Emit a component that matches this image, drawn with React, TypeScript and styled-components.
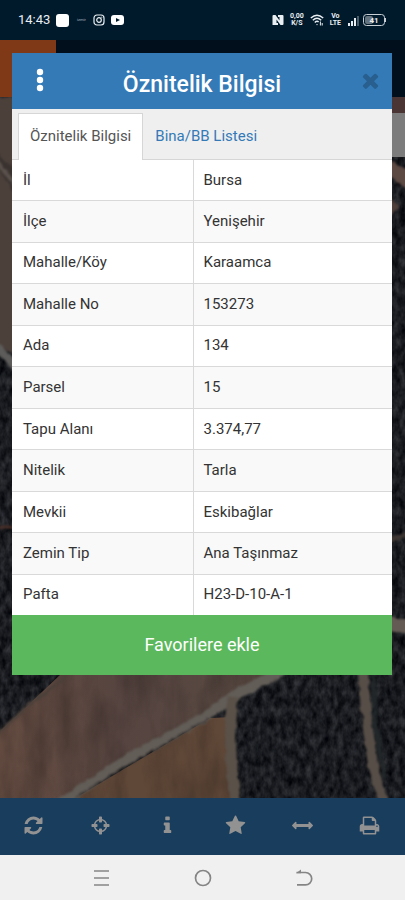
import React from "react";
import styled, { createGlobalStyle } from "styled-components";

const GlobalStyle = createGlobalStyle`
  *, *::before, *::after { box-sizing: border-box; }
  body { margin: 0; background: #001a2c; font-family: Roboto, "Noto Sans", sans-serif; }
  button { font-family: inherit; border: 0; padding: 0; background: none; cursor: pointer; }
`;

const Page = styled.div`
  display: flex;
  flex-direction: column;
  min-height: 100vh;
`;

const StatusBar = styled.div`
  display: flex;
  align-items: center;
  justify-content: space-between;
  height: 40px;
  padding: 0 18px;
  background: #001a2c;
  color: #e9eef2;
`;

const StatusGroup = styled.div`
  display: flex;
  align-items: center;
  gap: 6px;
`;

const Clock = styled.span`
  font-size: 13px;
  line-height: 16px;
`;

const AppBadge = styled.span`
  width: 13px;
  height: 13px;
  border-radius: 3px;
  background: #fff;
`;

const TinyLabel = styled.span`
  width: 12px;
  font-size: 4px;
  line-height: 8px;
  text-align: center;
  color: #aab4bc;
`;

const StackedLabel = styled.span`
  display: flex;
  flex-direction: column;
  align-items: center;
  font-size: 7px;
  line-height: 7px;
  font-weight: 700;
`;

const AppArea = styled.div`
  position: relative;
  flex: 1;
  display: flex;
  flex-direction: column;
`;

const AppHeader = styled.header`
  height: 57px;
  background: #000f1b;
`;

const MenuTile = styled.div`
  width: 56px;
  height: 100%;
  background: #803916;
`;

const MapArea = styled.main`
  position: relative;
  flex: 1;
  min-height: 600px;
  overflow: hidden;
  background: #1b1d21;
`;

const MapDrawing = styled.svg`
  position: absolute;
  inset: 0;
  width: 100%;
  height: 100%;
`;

const SearchPanel = styled.div`
  position: absolute;
  top: 16px;
  right: 0;
  width: 40px;
  height: 44px;
  background: #7c7c7c;
`;

const Toolbar = styled.nav`
  display: grid;
  grid-template-columns: repeat(6, 1fr);
  height: 57px;
  padding: 0 2px 2px 0;
  background: #193d5c;
`;

const ToolButton = styled.button`
  display: flex;
  align-items: center;
  justify-content: center;
  color: #929292;
`;

const NavBar = styled.nav`
  display: flex;
  align-items: center;
  justify-content: center;
  gap: 79px;
  height: 45px;
  background: #f0f0f0;
`;

const NavButton = styled.button`
  display: flex;
  width: 22px;
  height: 22px;
  color: #858585;
`;

const Overlay = styled.div`
  position: absolute;
  top: 0;
  left: 0;
  right: 0;
  padding: 13px 13px 0 12px;
`;

const Dialog = styled.section`
  display: flex;
  flex-direction: column;
  background: #fff;
`;

const DialogHeader = styled.header`
  display: grid;
  grid-template-columns: 30px 1fr 30px;
  align-items: center;
  height: 56px;
  padding: 0 7px 2px 13px;
  background: #337ab7;
`;

const Title = styled.h1`
  margin: 0;
  padding: 10px 6px 0 0;
  font-size: 23px;
  line-height: 28px;
  font-weight: 500;
  text-align: center;
  color: #fff;
`;

const HeaderButton = styled.button<{ $color: string }>`
  display: flex;
  align-items: center;
  justify-content: center;
  height: 30px;
  color: ${(p) => p.$color};
`;

const Tabs = styled.div`
  display: flex;
  align-items: flex-end;
  height: 51px;
  padding-left: 6px;
  background: #efefef;
  border-bottom: 1px solid #d6d6d6;
`;

const Tab = styled.button<{ $active?: boolean }>`
  height: 47px;
  padding: 0 11px 2px;
  margin-bottom: -1px;
  font-size: 15px;
  line-height: 20px;
  color: ${(p) => (p.$active ? "#555" : "#337ab7")};
  background: ${(p) => (p.$active ? "#fff" : "transparent")};
  border: 1px solid ${(p) => (p.$active ? "#d6d6d6" : "transparent")};
  border-bottom: 0;
`;

const Table = styled.table`
  width: 100%;
  height: 455px;
  table-layout: fixed;
  border-collapse: collapse;
  font-size: 15px;
  line-height: 20px;
  color: #333;
`;

const Row = styled.tr`
  &:nth-child(even) { background: #f9f9f9; }
  & + & { border-top: 1px solid #d9d9d9; }
`;

const Label = styled.th`
  width: 181px;
  padding: 0 11px 1px;
  font-weight: 400;
  text-align: left;
`;

const Value = styled.td`
  padding: 0 10px 1px;
  border-left: 1px solid #d9d9d9;
`;

const FavoriteButton = styled.button`
  height: 60px;
  font-size: 18px;
  line-height: 24px;
  color: #fff;
  background: #5cb85c;
`;

const rows: [string, string][] = [
  ["İl", "Bursa"],
  ["İlçe", "Yenişehir"],
  ["Mahalle/Köy", "Karaamca"],
  ["Mahalle No", "153273"],
  ["Ada", "134"],
  ["Parsel", "15"],
  ["Tapu Alanı", "3.374,77"],
  ["Nitelik", "Tarla"],
  ["Mevkii", "Eskibağlar"],
  ["Zemin Tip", "Ana Taşınmaz"],
  ["Pafta", "H23-D-10-A-1"],
];

const icons = {
  refresh:
    "M1639 1056q0 5-1 7-64 268-268 434.5t-478 166.5q-146 0-282.5-55t-243.5-157l-129 129q-19 19-45 19t-45-19-19-45v-448q0-26 19-45t45-19h448q26 0 45 19t19 45-19 45l-137 137q71 66 161 102t187 36q134 0 250-65t186-179q11-17 53-117 8-23 30-23h192q13 0 22.5 9.5t9.5 22.5zm25-800v448q0 26-19 45t-45 19h-448q-26 0-45-19t-19-45 19-45l138-138q-148-137-349-137-134 0-250 65t-186 179q-11 17-53 117-8 23-30 23h-199q-13 0-22.5-9.5t-9.5-22.5v-7q65-268 270-434.5t480-166.5q146 0 284 55.5t245 156.5l130-129q19-19 45-19t45 19 19 45z",
  crosshairs:
    "M1325 1024h-109q-26 0-45-19t-19-45v-128q0-26 19-45t45-19h109q-32-108-112.5-188.5t-188.5-112.5v109q0 26-19 45t-45 19h-128q-26 0-45-19t-19-45v-109q-108 32-188.5 112.5t-112.5 188.5h109q26 0 45 19t19 45v128q0 26-19 45t-45 19h-109q32 108 112.5 188.5t188.5 112.5v-109q0-26 19-45t45-19h128q26 0 45 19t19 45v109q108-32 188.5-112.5t112.5-188.5zm339-192v128q0 26-19 45t-45 19h-143q-37 161-154.5 278.5t-278.5 154.5v143q0 26-19 45t-45 19h-128q-26 0-45-19t-19-45v-143q-161-37-278.5-154.5t-154.5-278.5h-143q-26 0-45-19t-19-45v-128q0-26 19-45t45-19h143q37-161 154.5-278.5t278.5-154.5v-143q0-26 19-45t45-19h128q26 0 45 19t19 45v143q161 37 278.5 154.5t154.5 278.5h143q26 0 45 19t19 45z",
  info: "M1216 1344v128q0 26-19 45t-45 19h-512q-26 0-45-19t-19-45v-128q0-26 19-45t45-19h64v-384h-64q-26 0-45-19t-19-45v-128q0-26 19-45t45-19h384q26 0 45 19t19 45v576h64q26 0 45 19t19 45zm-128-1152v192q0 26-19 45t-45 19h-256q-26 0-45-19t-19-45v-192q0-26 19-45t45-19h256q26 0 45 19t19 45z",
  star: "M1728 647q0 22-26 48l-363 354 86 500q1 7 1 20 0 21-10.5 35.5t-30.5 14.5q-19 0-40-12l-449-236-449 236q-22 12-40 12-21 0-31.5-14.5t-10.5-35.5q0-6 2-20l86-500-364-354q-25-27-25-48 0-37 56-46l502-73 225-455q19-41 49-41t49 41l225 455 502 73q56 9 56 46z",
  arrows:
    "M1792 896q0 26-19 45l-256 256q-19 19-45 19t-45-19-19-45v-128h-1024v128q0 26-19 45t-45 19-45-19l-256-256q-19-19-19-45t19-45l256-256q19-19 45-19t45 19 19 45v128h1024v-128q0-26 19-45t45-19 45 19l256 256q19 19 19 45z",
  print:
    "M448 1536h896v-256h-896v256zm0-640h896v-384h-160q-40 0-68-28t-28-68v-160h-640v640zm1152 64q0-26-19-45t-45-19-45 19-19 45 19 45 45 19 45-19 19-45zm128 0v416q0 13-9.5 22.5t-22.5 9.5h-224v160q0 40-28 68t-68 28h-960q-40 0-68-28t-28-68v-160h-224q-13 0-22.5-9.5t-9.5-22.5v-416q0-79 56.5-135.5t135.5-56.5h64v-544q0-40 28-68t68-28h672q40 0 88 20t76 48l152 152q28 28 48 76t20 88v256h64q79 0 135.5 56.5t56.5 135.5z",
  times:
    "M1490 1322q0 40-28 68l-136 136q-28 28-68 28t-68-28l-294-294-294 294q-28 28-68 28t-68-28l-136-136q-28-28-28-68t28-68l294-294-294-294q-28-28-28-68t28-68l136-136q28-28 68-28t68 28l294 294 294-294q28-28 68-28t68 28l136 136q28 28 28 68t-28 68l-294 294 294 294q28 28 28 68z",
};

const Icon = ({ name, size = 21 }: { name: keyof typeof icons; size?: number }) => (
  <svg width={size} height={size} viewBox="0 0 1792 1792" fill="currentColor" aria-hidden="true">
    <path d={icons[name]} />
  </svg>
);

const tools: { name: keyof typeof icons; label: string }[] = [
  { name: "refresh", label: "Yenile" },
  { name: "crosshairs", label: "Konum" },
  { name: "info", label: "Bilgi" },
  { name: "star", label: "Favoriler" },
  { name: "arrows", label: "Ölçüm" },
  { name: "print", label: "Yazdır" },
];

const Satellite = () => (
  <MapDrawing viewBox="0 0 405 701" preserveAspectRatio="xMidYMax slice" aria-hidden="true">
    <defs>
      <filter id="trees" x="0" y="0" width="100%" height="100%" colorInterpolationFilters="sRGB">
        <feTurbulence type="fractalNoise" baseFrequency="0.16 0.1" numOctaves="3" seed="8" />
        <feColorMatrix values="0.26 0 0 0 -0.03  0.26 0 0 0 -0.022  0.26 0 0 0 -0.004  0 0 0 0 1" />
        <feComposite in2="SourceGraphic" operator="in" />
      </filter>
      <filter id="soil" x="0" y="0" width="100%" height="100%" colorInterpolationFilters="sRGB">
        <feTurbulence type="fractalNoise" baseFrequency="0.04 0.015" numOctaves="4" seed="4" result="n" />
        <feColorMatrix in="n" values="0 0 0 0 0.14  0 0 0 0 0.11  0 0 0 0 0.1  0.7 0 0 0 -0.25" />
        <feComposite in2="SourceGraphic" operator="in" result="shade" />
        <feMerge>
          <feMergeNode in="SourceGraphic" />
          <feMergeNode in="shade" />
        </feMerge>
      </filter>
      <filter
        id="rough"
        filterUnits="userSpaceOnUse"
        x="-10"
        y="-10"
        width="425"
        height="721"
        colorInterpolationFilters="sRGB"
      >
        <feTurbulence type="fractalNoise" baseFrequency="0.12" numOctaves="2" seed="2" />
        <feDisplacementMap in="SourceGraphic" scale="5" xChannelSelector="R" yChannelSelector="G" />
        <feGaussianBlur stdDeviation="0.8" />
      </filter>
      <linearGradient id="field" x1="0" y1="0" x2="1" y2="0">
        <stop offset="0" stopColor="#664d42" />
        <stop offset="0.45" stopColor="#564440" />
        <stop offset="1" stopColor="#594a42" />
      </linearGradient>
    </defs>
    <rect width="405" height="701" filter="url(#trees)" />
    <g filter="url(#rough)">
      <path d="M-8 0H22V262L-8 245Z" fill="#4c403b" />
      <path d="M-8 50L22 80V108L-8 62Z" fill="#39322f" />
      <path d="M-8 58L20 94" stroke="#5b524d" strokeWidth="4" />
      <path d="M-8 246L22 275" stroke="#5d5c5a" strokeWidth="8" />
      <path d="M-8 430H20" stroke="#4a302a" strokeWidth="3" />
      <path d="M390 -3H412V18H390Z" fill="#4a3534" />
      <path d="M386 62L412 75V96L386 78Z" fill="#5c4943" />
      <path d="M386 92L399 110L386 125Z" fill="#4f3f3a" />
      <path d="M386 444L412 436" stroke="#3c3532" strokeWidth="6" />
      <path d="M386 526L412 531" stroke="#655b55" strokeWidth="15" />
    </g>
    <g filter="url(#soil)">
      <path d="M60 578L24 612L0 634V701H65L270 578Z" fill="url(#field)" />
      <path d="M75 701L210 621L232 620L236 701Z" fill="#604838" />
    </g>
    <path d="M68 578L42 598L20 616L-4 638" fill="none" stroke="#4b403a" strokeWidth="3" filter="url(#rough)" />
    <g fill="none" filter="url(#rough)">
      <path d="M58 708L120 667L203 621L235 598L282 574" stroke="#625d57" strokeWidth="10" />
      <path d="M75 700L135 664L208 622" stroke="#302a28" strokeWidth="1" />
      <path d="M233 600Q227 645 236 710" stroke="#5a5149" strokeWidth="11" />
      <path d="M363 574L367 625L374 675L385 708" stroke="#574e48" strokeWidth="10" />
      <path d="M373 576L375 625L384 680" stroke="#22282a" strokeWidth="4" />
    </g>
  </MapDrawing>
);

export default function App() {
  return (
    <Page>
      <GlobalStyle />
      <StatusBar>
        <StatusGroup>
          <Clock>14:43</Clock>
          <AppBadge />
          <TinyLabel>izmir</TinyLabel>
          <svg width="12" height="12" viewBox="0 0 12 12" fill="none" stroke="currentColor">
            <rect x="1" y="1" width="10" height="10" rx="3" strokeWidth="1.2" />
            <circle cx="6" cy="6" r="2.3" strokeWidth="1.2" />
            <circle cx="8.8" cy="3.2" r="0.4" strokeWidth="0.5" />
          </svg>
          <svg width="13" height="10" viewBox="0 0 13 10">
            <rect width="13" height="10" rx="3" fill="#fff" />
            <path d="M5 3L9 5L5 7Z" fill="#001a2c" />
          </svg>
        </StatusGroup>
        <StatusGroup>
          <svg width="12" height="12" viewBox="0 0 12 12">
            <path
              d="M.5 11V2Q.5 1 1.500 1H3.500L7.500 6.500V3H6V1H10.500Q11.500 1 11.500 2V10Q11.500 11 10.500 11H8.500L4.500 5.500V9H6V11Z"
              fill="currentColor"
            />
          </svg>
          <StackedLabel>
            <span>0,00</span>
            <span>K/S</span>
          </StackedLabel>
          <svg width="14" height="12" viewBox="0 0 14 12" fill="none" stroke="currentColor" strokeWidth="1.4">
            <path d="M.8 4Q7-1.6 13.2 4M2.8 6.3Q7 2.3 11.2 6.3M4.8 8.5Q7 6.4 8.6 8" />
            <circle cx="7" cy="10.6" r="0.7" fill="currentColor" stroke="none" />
            <path d="M10.4 7.5V11.5M12.2 9V11.5" strokeWidth="1" />
          </svg>
          <StackedLabel>
            <span>Vo</span>
            <span>LTE</span>
          </StackedLabel>
          <svg width="40" height="14" viewBox="0 0 40 14">
            <g fill="currentColor">
              <rect x="1" y="10" width="2" height="3" />
              <rect x="4" y="8" width="2" height="5" />
              <rect x="7" y="5" width="2" height="8" />
            </g>
            <rect x="10" y="3" width="2" height="10" fill="#4b5c69" />
            <rect x="16.5" y="1.5" width="21" height="11" rx="3" fill="none" stroke="#c8d0d6" />
            <rect x="18" y="3" width="8" height="8" rx="2" fill="#65747f" />
            <rect x="38" y="5" width="1" height="4" fill="#c8d0d6" />
            <text x="27" y="10" fontSize="8" fontWeight="700" textAnchor="middle" fill="#e9eef2">
              41
            </text>
          </svg>
        </StatusGroup>
      </StatusBar>

      <AppArea>
        <AppHeader>
          <MenuTile />
        </AppHeader>
        <MapArea>
          <Satellite />
          <SearchPanel />
        </MapArea>
        <Toolbar aria-label="Harita araçları">
          {tools.map((t) => (
            <ToolButton key={t.name} type="button" aria-label={t.label}>
              <Icon name={t.name} />
            </ToolButton>
          ))}
        </Toolbar>

        <Overlay>
          <Dialog role="dialog" aria-labelledby="dialog-title">
            <DialogHeader>
              <HeaderButton type="button" aria-label="Menü" $color="#fff">
                <svg width="8" height="24" viewBox="0 0 8 24" fill="currentColor">
                  <circle cx="4" cy="4" r="3.2" />
                  <circle cx="4" cy="12" r="3.2" />
                  <circle cx="4" cy="20" r="3.2" />
                </svg>
              </HeaderButton>
              <Title id="dialog-title">Öznitelik Bilgisi</Title>
              <HeaderButton type="button" aria-label="Kapat" $color="#285f8f">
                <Icon name="times" size={23} />
              </HeaderButton>
            </DialogHeader>
            <Tabs role="tablist">
              <Tab type="button" role="tab" aria-selected="true" $active>
                Öznitelik Bilgisi
              </Tab>
              <Tab type="button" role="tab" aria-selected="false">
                Bina/BB Listesi
              </Tab>
            </Tabs>
            <Table>
              <tbody>
                {rows.map(([label, value]) => (
                  <Row key={label}>
                    <Label scope="row">{label}</Label>
                    <Value>{value}</Value>
                  </Row>
                ))}
              </tbody>
            </Table>
            <FavoriteButton type="button">Favorilere ekle</FavoriteButton>
          </Dialog>
        </Overlay>
      </AppArea>

      <NavBar aria-label="Sistem">
        <NavButton type="button" aria-label="Son uygulamalar">
          <svg width="22" height="22" viewBox="0 0 22 22" fill="none" stroke="currentColor" strokeWidth="1.7">
            <path d="M3 4H18M3 11H18M3 18H18" />
          </svg>
        </NavButton>
        <NavButton type="button" aria-label="Ana ekran">
          <svg width="22" height="22" viewBox="0 0 22 22" fill="none" stroke="currentColor" strokeWidth="1.7">
            <circle cx="11" cy="11" r="7.5" />
          </svg>
        </NavButton>
        <NavButton type="button" aria-label="Geri">
          <svg width="22" height="22" viewBox="0 0 22 22" fill="none" stroke="currentColor" strokeWidth="1.7">
            <path d="M3.500 5.500H12.500A6.200 6.200 0 0 1 12.500 17.900H4" />
            <path d="M3 6.300L8 2.500V6.300Z" fill="currentColor" stroke="none" />
          </svg>
        </NavButton>
      </NavBar>
    </Page>
  );
}
